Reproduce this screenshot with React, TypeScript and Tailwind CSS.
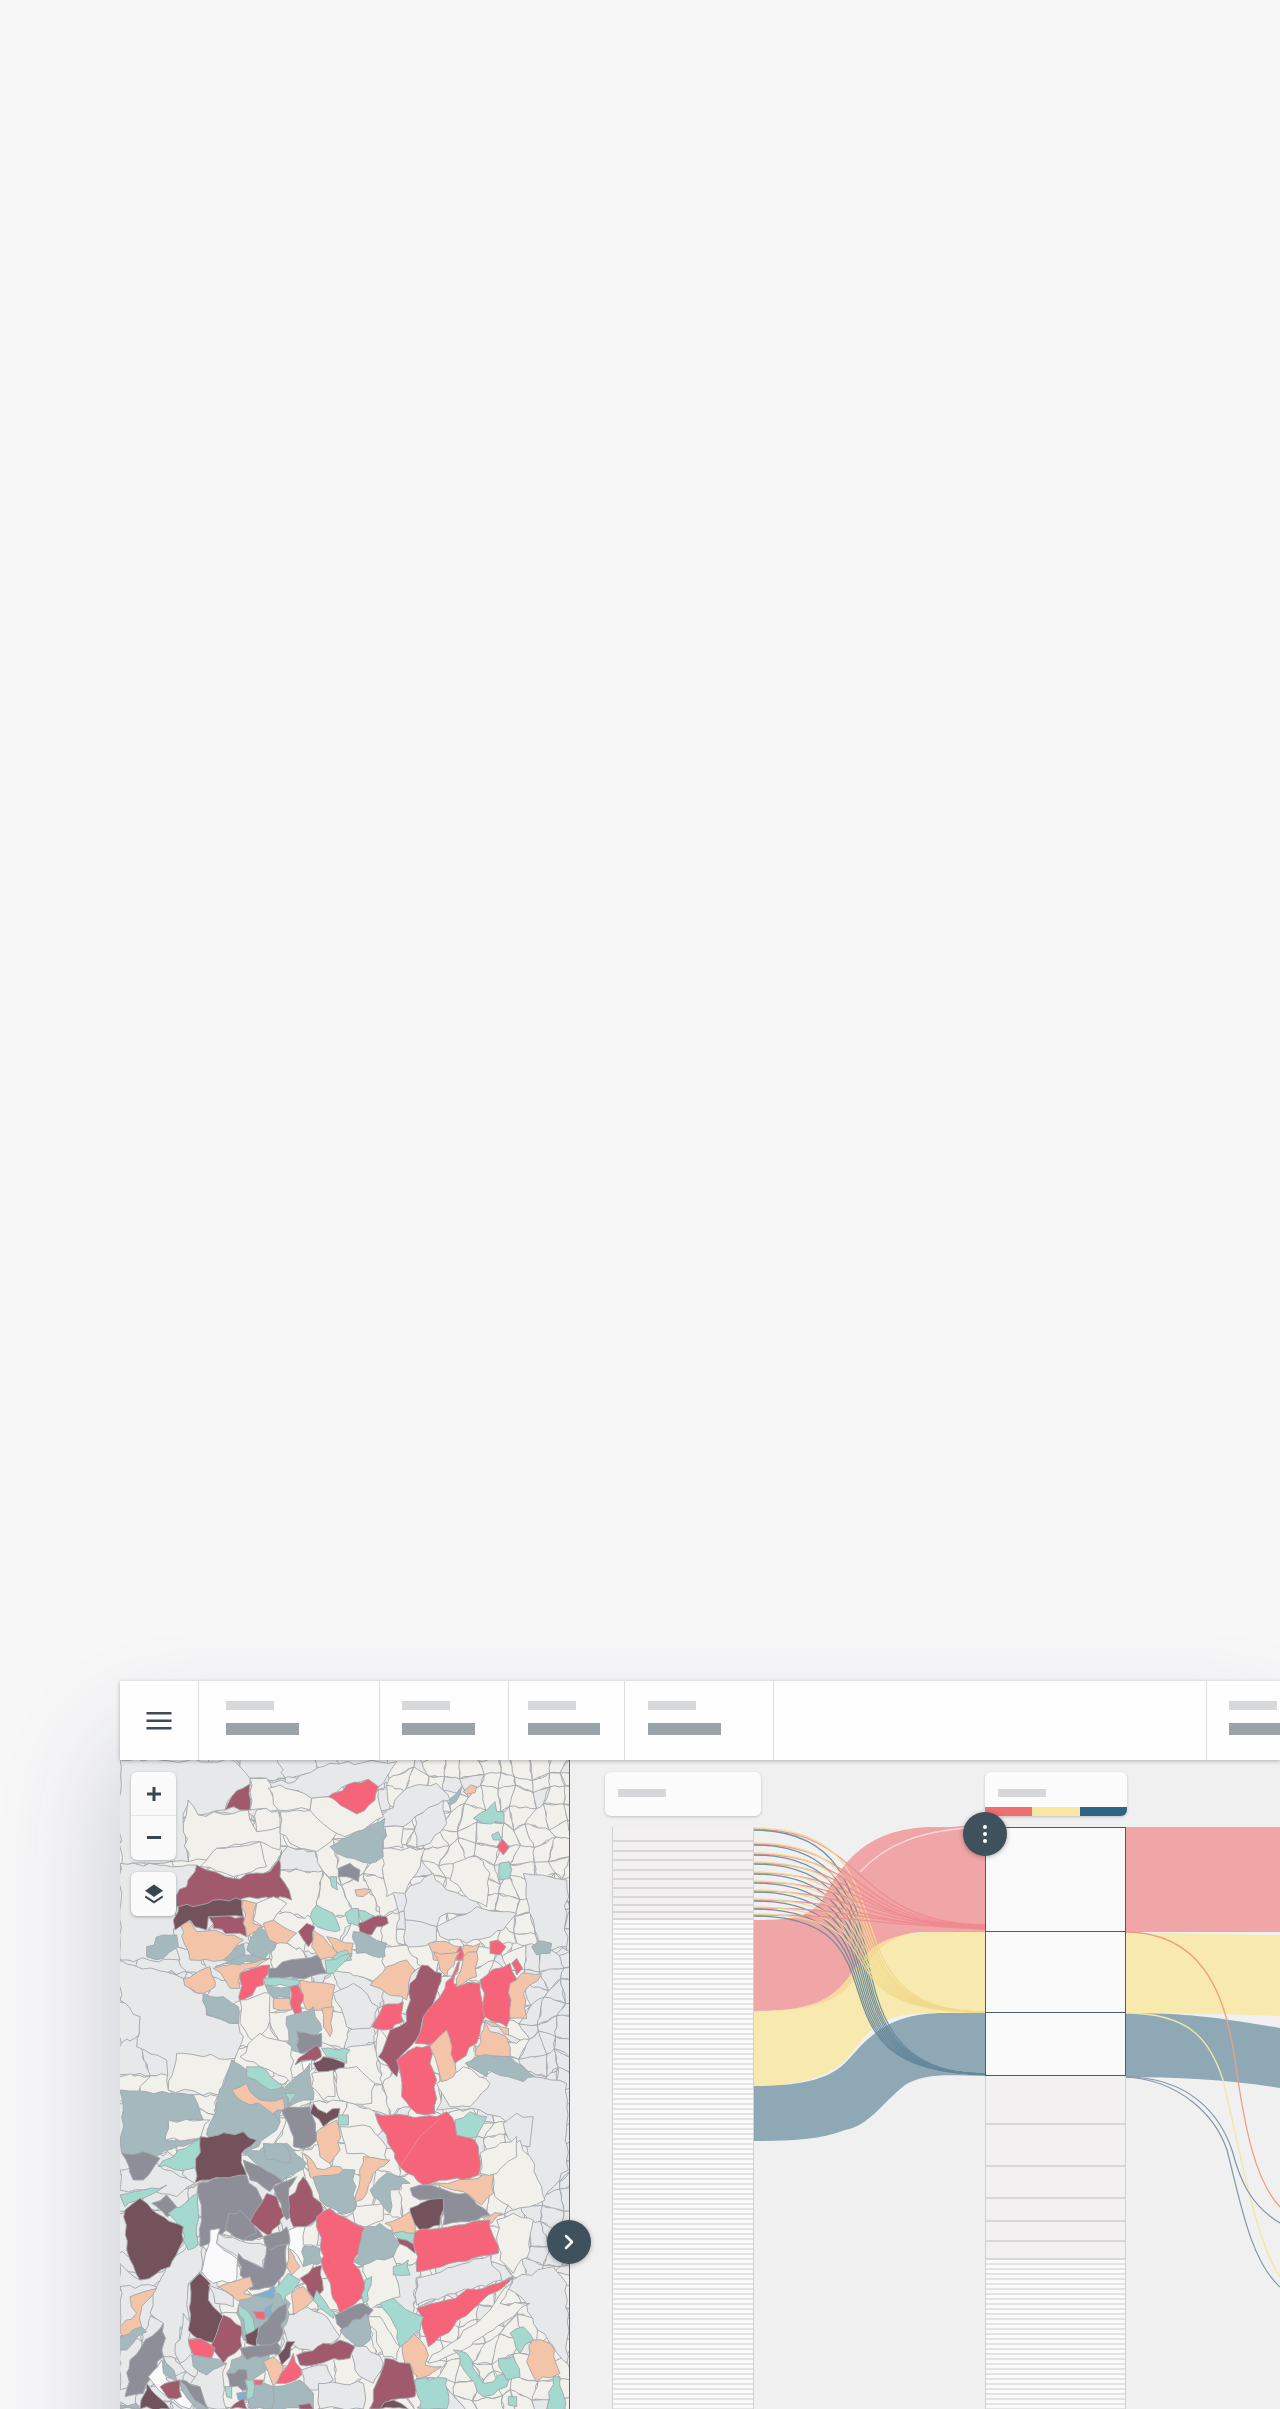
import { ChevronRight } from "lucide-react";

const COLORS: Record<string, string> = {
  c: "#f2f0eb",
  g: "#e7e8ea",
  t: "#a3b9bd",
  a: "#a3d9cf",
  p: "#f4c4a8",
  r: "#f6647a",
  m: "#a05a6b",
  d: "#74525c",
  s: "#8e8e98",
  w: "#fafafb",
  b: "#7fb0cf",
};

// regions traced from the top part of the map
const TOP_REGIONS: [string, string][] = [
  ["g", "60,300 400,300 450,355 565,370 690,310 890,305 850,370 835,380 805,358 740,375 685,410 635,415 570,390 505,385 500,355 450,355 450,372 395,410 375,450 295,465 265,420 250,490 265,605 90,610 60,630"],
  ["g", "60,610 290,615 260,680 230,705 230,740 220,810 240,900 60,900"],
  ["g", "830,490 920,385 1010,370 1050,420 945,470 910,500 855,500"],
  ["g", "945,470 1030,420 1040,490 990,550 950,560"],
  ["g", "915,700 1000,640 1040,690 1110,710 1150,750 1020,770 1010,800 915,780"],
  ["g", "1270,640 1400,660 1400,860 1330,880 1300,780"],
  ["g", "915,780 1010,800 1010,840 950,860 915,850"],
  ["g", "1010,800 1130,740 1250,760 1210,810 1100,850 1020,830"],
  ["c", "265,420 295,465 445,450 470,515 540,500 540,570 480,545 350,565 320,600 265,605 250,490"],
  ["c", "320,600 350,565 480,545 500,620 400,650 300,620"],
  ["c", "450,355 500,355 535,450 450,450"],
  ["c", "505,385 540,375 635,415 630,450 535,450"],
  ["c", "540,455 630,450 710,520 650,575 570,550 540,520"],
  ["c", "635,415 690,410 770,460 835,390 850,470 790,510 735,530 710,520 630,450"],
  ["c", "470,450 535,455 540,500 470,515"],
  ["c", "855,500 910,500 910,565 850,565"],
  ["c", "850,565 975,565 950,640 915,700 860,710 850,650"],
  ["c", "1060,610 1130,590 1170,640 1160,740 1090,700 1050,660"],
  ["r", "685,410 740,375 805,358 835,380 825,420 770,462 720,435"],
  ["m", "375,450 395,410 450,372 450,450 420,450 400,440"],
  ["t", "690,560 745,530 790,510 855,475 850,590 810,610 760,595 710,580"],
  ["m", "290,615 320,630 400,655 490,640 520,620 545,570 540,650 575,720 540,710 430,715 300,745 230,740 230,705 260,680"],
  ["p", "240,790 270,785 290,815 340,810 400,825 430,840 370,900 270,900"],
  ["m", "325,770 430,770 440,830 400,820 340,805"],
  ["d", "235,740 300,735 340,720 425,720 430,770 325,770 320,810 285,800 270,780 225,810 220,780"],
  ["p", "430,720 470,730 460,790 490,800 440,830"],
  ["c", "470,730 520,710 560,730 520,780 490,800 460,780"],
  ["t", "140,860 190,825 230,825 235,860 190,895 140,890"],
  ["s", "715,625 750,610 780,630 775,665 740,650 715,650"],
  ["p", "765,690 815,690 790,710 770,708"],
  ["a", "1120,475 1160,450 1185,425 1190,455 1212,455 1212,490 1150,490"],
  ["a", "1175,525 1195,515 1205,540 1180,540"],
  ["r", "1190,560 1208,538 1228,562 1210,585"],
  ["a", "1198,610 1228,605 1228,655 1200,660"],
  ["p", "1090,395 1112,375 1130,380 1125,398 1100,402"],
  ["t", "1045,430 1085,380 1080,405 1050,435"],
  ["a", "630,770 650,735 700,760 720,810 680,810 640,790"],
  ["a", "735,760 775,745 780,800 745,790"],
  ["a", "775,750 830,775 790,790 780,775"],
  ["m", "775,790 820,770 860,770 865,790 830,800 815,825 780,815"],
  ["m", "595,815 620,790 645,800 640,840 625,860"],
  ["p", "490,790 520,780 590,820 560,850 490,850"],
  ["t", "450,840 480,800 530,850 490,900 440,870"],
  ["p", "640,810 670,830 720,895 660,900 635,860"],
  ["p", "680,830 760,850 755,890 720,885"],
  ["t", "760,815 860,850 855,890 770,880"],
  ["p", "985,850 1040,845 1085,860 1090,900 1000,900"],
  ["p", "1090,855 1140,850 1130,900 1095,900"],
  ["r", "1170,845 1195,840 1218,860 1200,885 1170,880"],
  ["t", "1295,860 1320,842 1355,850 1350,880 1310,885"],
  ["r", "1070,900 1080,858 1095,900"],
  ["a", "690,650 710,650 712,690 695,680"],
  ["t", "370,900 430,850 430,900"],
  ["a", "700,890 740,870 755,900 700,900"],
];

// regions traced from the lower part of the map
const LOW_REGIONS: [string, string][] = [
  ["g", "60,30 250,85 270,115 310,130 320,195 415,220 430,260 405,325 360,440 205,420 200,330 110,290 120,200 75,160 60,150"],
  ["g", "700,130 760,100 835,170 810,235 740,230"],
  ["g", "1040,410 1130,400 1210,340 1300,380 1400,400 1405,660 1330,750 1280,590 1200,500 1140,480 1010,480"],
  ["g", "1210,520 1250,490 1300,500 1290,590 1240,580"],
  ["g", "60,660 170,640 285,700 230,740 130,720 60,720"],
  ["g", "60,940 120,990 210,950 190,990 130,1030 60,1020"],
  ["g", "60,1010 170,1010 180,1050 130,1150 60,1130"],
  ["g", "260,890 310,880 305,960 265,1000 265,1140 240,1130 240,1230 190,1220 190,1120 150,1090 170,1010 200,950"],
  ["g", "250,1090 275,1120 265,1170 275,1210 240,1240 225,1210"],
  ["g", "1200,1000 1360,950 1400,1000 1400,1240 1300,1120 1280,1060"],
  ["g", "300,1230 380,1240 370,1290 380,1377 280,1377 270,1320"],
  ["g", "605,1260 680,1245 700,1290 650,1320 620,1320"],
  ["g", "655,1300 790,1300 790,1377 660,1377"],
  ["g", "745,1190 800,1190 850,1240 820,1300 765,1260"],
  ["c", "230,310 405,325 355,435 205,420"],
  ["c", "985,1235 1170,1080 1240,980 1200,1060 1290,1060 1180,1140 1090,1200 1040,1220 985,1240"],
  ["c", "1145,640 1260,570 1290,620 1335,750 1240,780 1185,740 1180,670"],
  ["c", "1190,810 1240,790 1300,810 1290,900 1240,970 1200,930"],
  ["t", "310,130 370,140 415,170 415,220 320,195"],
  ["p", "250,85 330,50 345,110 310,130 270,115"],
  ["p", "340,55 510,25 420,70 420,115 390,115"],
  ["r", "420,70 510,45 490,105 420,155"],
  ["t", "345,50 440,15 510,25"],
  ["s", "505,55 650,15 680,70 590,85 505,85"],
  ["a", "490,85 590,90 605,100 570,110 495,105"],
  ["t", "495,105 570,110 570,145 520,145"],
  ["p", "520,145 570,145 575,180 520,175"],
  ["r", "570,110 595,105 615,145 590,210 570,160"],
  ["p", "600,90 705,105 695,180 620,180"],
  ["p", "665,175 700,170 690,260 670,230"],
  ["a", "675,30 730,15 755,10 700,70 680,70"],
  ["t", "560,200 640,170 665,240 610,310 560,290"],
  ["s", "590,245 665,250 665,290 600,310"],
  ["m", "585,345 610,315 650,285 665,320 630,330"],
  ["a", "665,295 750,300 740,340 680,320"],
  ["d", "640,340 670,320 735,340 730,360 665,375"],
  ["w", "605,335 635,330 635,360 615,375"],
  ["t", "395,330 440,360 560,420 565,470 545,480 530,540 430,610 320,555 355,440"],
  ["a", "440,350 480,350 550,410 510,420 440,380"],
  ["t", "555,410 630,340 640,450 565,470"],
  ["a", "555,430 590,430 570,465"],
  ["p", "395,420 440,400 480,450 550,445 555,480 520,490 540,515 490,470 430,455"],
  ["t", "60,420 280,435 310,510 210,510 195,570 300,565 170,620 65,610 70,480"],
  ["c", "205,510 310,510 330,510 300,565 195,570"],
  ["a", "175,650 235,600 305,565 300,660"],
  ["s", "65,610 130,605 180,625 130,690 100,690"],
  ["d", "300,560 430,545 470,570 425,610 440,675 285,698"],
  ["s", "295,700 440,675 500,770 450,810 490,860 430,870 380,840 300,890"],
  ["s", "385,790 420,780 460,820 470,850 430,870 375,840"],
  ["a", "60,735 130,720 200,705 130,745 75,770"],
  ["s", "155,760 200,735 230,770 200,800"],
  ["a", "205,790 295,730 295,880 265,900 240,830"],
  ["d", "75,780 120,745 170,790 250,830 250,870 210,950 120,990 80,900"],
  ["p", "90,1040 170,1015 125,1070 125,1130 75,1165 60,1130 110,1090"],
  ["t", "60,1160 125,1130 140,1145 80,1200 60,1200"],
  ["s", "90,1230 190,1120 190,1220 130,1330 75,1340"],
  ["w", "145,1280 185,1230 200,1290 275,1340 270,1377 200,1340"],
  ["t", "190,1220 230,1290 300,1310 320,1377 290,1377 240,1300 190,1270"],
  ["s", "235,1290 300,1310 325,1377 270,1330"],
  ["m", "180,1310 240,1290 245,1340 205,1345"],
  ["d", "120,1377 140,1300 210,1377"],
  ["t", "60,1365 110,1360 120,1377 60,1377"],
  ["w", "330,840 360,835 350,880 415,930 410,990 340,1000 305,965"],
  ["g", "355,850 500,890 490,955 400,910 350,880"],
  ["s", "415,910 490,955 500,890 560,880 560,950 520,1010 450,1020 420,975"],
  ["d", "270,1000 300,970 330,1000 325,1050 370,1100 355,1180 300,1170 265,1140"],
  ["m", "370,1095 425,1130 425,1190 370,1240 330,1190"],
  ["r", "265,1170 300,1165 345,1195 335,1225 280,1215"],
  ["g", "325,1005 400,1040 400,1070 345,1060"],
  ["t", "275,1215 330,1225 370,1240 380,1240 320,1275 280,1250"],
  ["p", "355,1010 450,980 460,1010 430,1030 500,1050 490,1065 410,1050"],
  ["c", "420,150 510,130 510,210 470,280 420,220"],
  ["c", "420,320 480,250 575,290 575,400 480,350"],
  ["c", "635,370 700,360 705,440 670,450 635,410"],
  ["c", "705,360 770,350 825,400 815,460 720,450"],
  ["c", "720,530 810,530 860,590 860,630 790,610 740,610"],
  ["c", "760,770 850,760 850,810 800,830 765,820"],
  ["c", "830,210 890,330 890,380 830,320"],
  ["s", "545,480 630,470 660,560 630,590 580,590 565,520"],
  ["d", "630,490 640,460 680,490 720,475 715,500 670,530"],
  ["a", "715,495 745,495 745,525 715,525"],
  ["p", "650,545 710,510 720,600 690,640 660,620"],
  ["t", "430,610 560,580 620,640 550,690 480,650"],
  ["t", "490,580 560,590 570,640 500,630"],
  ["s", "430,630 480,650 550,695 510,725 450,690"],
  ["p", "610,610 650,655 720,650 745,680 705,725 630,680"],
  ["t", "640,680 765,660 765,780 720,790 660,750"],
  ["p", "790,620 870,630 820,670 800,730 765,755"],
  ["t", "810,720 860,670 930,700 870,720 870,790 820,740"],
  ["m", "450,815 500,730 530,740 560,790 510,860"],
  ["s", "520,710 590,680 565,740 595,800 560,810 530,740"],
  ["m", "565,740 610,680 670,780 620,830 580,830"],
  ["s", "490,860 560,830 570,880 510,900"],
  ["w", "565,840 620,830 610,950 595,920 565,895"],
  ["c", "615,830 650,810 650,890 610,885"],
  ["t", "610,890 660,895 670,935 610,950"],
  ["p", "565,895 600,950 575,975 560,950"],
  ["r", "650,800 690,775 790,830 800,860 760,940 790,990 795,1040 720,1090 670,960"],
  ["t", "800,830 840,820 900,880 880,920 790,950 760,935"],
  ["m", "600,985 665,945 670,1020 640,1045"],
  ["p", "575,1030 610,1010 640,1050 605,1095 580,1090"],
  ["a", "650,1020 705,1090 700,1105 640,1050"],
  ["c", "790,945 880,920 900,1040 810,1080"],
  ["a", "880,950 925,930 930,975 880,975"],
  ["a", "795,990 815,980 805,1050 790,1060"],
  ["s", "705,1095 790,1060 820,1080 770,1130 730,1140"],
  ["t", "720,1140 800,1090 810,1170 770,1190"],
  ["g", "545,1110 620,1070 680,1100 720,1160 640,1215 560,1170"],
  ["c", "805,1100 840,1100 900,1190 890,1230 850,1220"],
  ["t", "420,1050 530,1030 570,1060 560,1120 500,1190 430,1170 410,1090"],
  ["a", "415,1065 445,1085 470,1150 445,1160"],
  ["a", "520,1020 565,970 600,990 550,1060"],
  ["b", "460,1035 520,1005 520,1045 480,1040"],
  ["b", "495,1075 520,1060 515,1100 495,1105"],
  ["r", "460,1085 495,1085 495,1110 470,1105"],
  ["s", "480,1130 560,1060 540,1170 500,1200 465,1180"],
  ["d", "435,1155 475,1130 470,1190 440,1180"],
  ["t", "395,1230 520,1190 500,1260 440,1300 380,1270"],
  ["s", "420,1195 530,1175 540,1215 440,1230"],
  ["m", "590,1215 720,1170 765,1190 750,1225 600,1245"],
  ["p", "490,1235 520,1220 550,1250 520,1310"],
  ["d", "535,1215 560,1175 585,1175 570,1220 545,1245"],
  ["r", "530,1300 580,1210 605,1275 560,1300"],
  ["s", "380,1270 440,1260 450,1320 390,1310"],
  ["t", "440,1300 520,1310 515,1377 450,1377"],
  ["t", "520,1310 600,1290 640,1330 640,1377 515,1377"],
  ["a", "375,1310 395,1310 395,1345 380,1340"],
  ["a", "435,1290 460,1290 460,1340 440,1350"],
  ["r", "460,1290 490,1290 485,1305 465,1305"],
  ["b", "410,1330 440,1325 440,1350 415,1350"],
  ["m", "390,1377 430,1345 440,1377"],
  ["m", "595,1365 630,1360 640,1377 600,1377"],
  ["s", "930,715 960,705 1100,730 1170,795 1030,825 1030,750 960,750"],
  ["d", "930,775 985,750 1030,745 1020,825 960,840 930,810"],
  ["p", "990,705 1180,670 1180,730 1145,765 1090,725"],
  ["p", "855,820 930,785 945,850 880,850"],
  ["a", "880,850 945,850 945,880 900,870"],
  ["m", "890,865 945,885 945,910 920,890"],
  ["p", "1145,800 1205,790 1175,820"],
  ["r", "945,845 1170,810 1195,910 950,965"],
  ["g", "950,985 1170,915 1205,990 950,1065"],
  ["r", "950,1075 1240,980 985,1190"],
  ["r", "825,490 1010,500 1040,485 1135,590 1135,675 970,705 900,650"],
  ["a", "1065,510 1110,485 1160,500 1130,560 1070,555"],
  ["c", "1140,610 1250,560 1250,620 1190,670 1140,670"],
  ["c", "1010,400 1090,350 1170,400 1110,470 1050,470"],
  ["m", "835,320 870,240 920,215 930,100 965,45 1025,70 1010,130 1000,190 970,200 960,250 900,320 890,380"],
  ["r", "890,330 950,290 990,285 990,340 1010,390 1005,490 950,490 905,440"],
  ["r", "945,280 970,200 1020,140 1090,20 1060,100 1140,100 1155,200 1130,280 1060,345 1040,240 990,285"],
  ["r", "1140,90 1230,40 1255,95 1220,230 1155,200"],
  ["r", "1235,40 1250,25 1268,55 1250,75"],
  ["p", "1230,100 1265,70 1325,70 1270,130 1280,205 1230,205"],
  ["p", "990,290 1040,240 1065,340 1060,380 1025,395 1010,340"],
  ["p", "1155,210 1225,235 1230,320 1125,315"],
  ["p", "810,105 860,50 920,30 945,60 925,100 920,150 860,130"],
  ["r", "815,230 850,165 910,155 910,215 850,240"],
  ["p", "1000,5 1080,5 1040,80 1020,60"],
  ["p", "1090,20 1130,5 1130,80 1070,110"],
  ["t", "1095,340 1130,320 1230,320 1305,380 1270,395 1165,360 1160,380"],
  ["g", "1155,215 1260,270 1250,280 1170,245"],
  ["p", "905,1175 940,1150 985,1215 975,1245 1025,1250 960,1285 915,1240"],
  ["a", "840,1060 880,1045 970,1100 960,1140 900,1190 880,1120"],
  ["a", "945,1290 1040,1285 1040,1377 960,1377"],
  ["m", "820,1320 855,1225 930,1240 945,1340 870,1350 840,1377 810,1377"],
  ["d", "840,1377 880,1350 925,1377"],
  ["a", "1060,1200 1100,1210 1150,1300 1225,1270 1220,1310 1150,1340"],
  ["p", "1280,1235 1300,1170 1350,1180 1380,1270 1310,1295"],
  ["a", "1230,1150 1270,1130 1300,1170 1260,1210"],
  ["a", "1195,1225 1240,1220 1260,1280 1220,1290"],
  ["a", "1360,1280 1380,1280 1395,1377 1340,1377"],
  ["a", "1225,1340 1250,1340 1250,1370 1225,1365"],
];

const hash = (i: number, j: number) => {
  const v = Math.sin(i * 12.9898 + j * 78.233) * 43758.5453;
  return v - Math.floor(v);
};

// break long edges up so borders look like hand-drawn municipal limits
function roughen(points: string, seg = 24, amp = 7) {
  const pts = points.split(" ").map((p) => p.split(",").map(Number));
  const out: string[] = [];
  pts.forEach(([x, y], n) => {
    const [nx, ny] = pts[(n + 1) % pts.length];
    const steps = Math.max(1, Math.round(Math.hypot(nx - x, ny - y) / seg));
    for (let s = 0; s < steps; s++) {
      const k = s / steps;
      const dx = s === 0 ? 0 : (hash(x + s, y) - 0.5) * amp * 2;
      const dy = s === 0 ? 0 : (hash(y + s, x + 5) - 0.5) * amp * 2;
      out.push(`${(x + (nx - x) * k + dx).toFixed(0)},${(y + (ny - y) * k + dy).toFixed(0)}`);
    }
  });
  return out.join(" ");
}

// which base colour a filler cell gets, outside the traced regions
function baseFill(x: number, y: number) {
  if (x < 420 && y > -130 && y < 420) return COLORS.g;
  if (y < -420 && x < 900) return COLORS.g;
  if (x > 1300 && y > -130 && y < 1000) return COLORS.g;
  if (x < 300 && y > 600) return COLORS.g;
  if (x > 690 && x < 830 && y > 90 && y < 240) return COLORS.g;
  return COLORS.c;
}

// thin mesh of small cells sitting under the traced regions
function meshCells(x0: number, y0: number, cols: number, rows: number, step: number) {
  const corner = (i: number, j: number) =>
    `${(x0 + i * step + (hash(i, j) - 0.5) * step * 0.8).toFixed(0)},${(y0 + j * step + (hash(j + 7, i + 3) - 0.5) * step * 0.8).toFixed(0)}`;
  const cells: { pts: string; fill: string }[] = [];
  for (let i = 0; i < cols; i++) {
    for (let j = 0; j < rows; j++) {
      const cx = x0 + (i + 0.5) * step;
      const cy = y0 + (j + 0.5) * step;
      const stray = hash(i + 31, j + 11) > 0.9;
      cells.push({
        pts: roughen([corner(i, j), corner(i + 1, j), corner(i + 1, j + 1), corner(i, j + 1)].join(" "), 16, step > 60 ? 7 : 4),
        fill: stray ? COLORS.g : baseFill(cx, cy),
      });
    }
  }
  return cells;
}

const WIDE_CELLS = meshCells(30, -620, 15, 22, 100);
const TIGHT_CELLS = [...meshCells(880, -580, 11, 11, 52), ...meshCells(1120, 0, 6, 27, 52), ...meshCells(970, 1000, 9, 8, 56)];
const TOP_SHAPES = TOP_REGIONS.map(([k, pts]) => [k, roughen(pts)]);
const LOW_SHAPES = LOW_REGIONS.map(([k, pts]) => [k, roughen(pts)]);

function ChoroplethMap() {
  return (
    <svg viewBox="60 -570 1347 1947" className="block h-[649px] w-[449px]">
      <rect x="60" y="-570" width="1347" height="1947" fill={COLORS.g} />
      <g stroke="#a3a8ac" strokeWidth="2.8" strokeLinejoin="round">
        {WIDE_CELLS.map((c, i) => (
          <polygon key={i} points={c.pts} fill={c.fill} />
        ))}
        {TIGHT_CELLS.map((c, i) => (
          <polygon key={i} points={c.pts} fill={c.fill} />
        ))}
        <g transform="translate(0 -870)">
          {TOP_SHAPES.map(([k, pts], i) => (
            <polygon key={i} points={pts} fill={COLORS[k]} />
          ))}
        </g>
        {LOW_SHAPES.map(([k, pts], i) => (
          <polygon key={i} points={pts} fill={COLORS[k]} />
        ))}
        <polyline points="900,650 960,560 1020,505" fill="none" stroke="#e98a98" />
      </g>
    </svg>
  );
}

const HEADER_CELLS = [
  { cls: "w-[181px] pl-[27px]" },
  { cls: "w-[129px] pl-[22px]" },
  { cls: "w-[116px] pl-[19px]" },
  { cls: "w-[149px] pl-[23px]" },
];

function HeaderBars({ wide = 73 }: { wide?: number }) {
  return (
    <div className="pt-5">
      <div className="h-[9px] w-12 bg-[#d6d8dc]" />
      <div className="mt-[13px] h-3 bg-[#9aa3a8]" style={{ width: wide }} />
    </div>
  );
}

function TopBar() {
  return (
    <div className="relative z-10 flex h-[79px] bg-[#fefefe] shadow-[0_1px_4px_rgba(0,0,0,0.28)]">
      <div className="flex w-[79px] shrink-0 items-center justify-center border-r border-[#dcdde0]">
        <svg width="26" height="18" viewBox="0 0 26 18" fill="#3c4d57">
          <rect x="0.5" y="0" width="25" height="2.5" />
          <rect x="0.5" y="7.5" width="25" height="2.5" />
          <rect x="0.5" y="15" width="25" height="2.5" />
        </svg>
      </div>
      {HEADER_CELLS.map((c, i) => (
        <div key={i} className={`${c.cls} shrink-0 border-r border-[#dcdde0]`}>
          <HeaderBars wide={i === 2 ? 72 : 73} />
        </div>
      ))}
      <div className="w-[433px] shrink-0 border-r border-[#dcdde0]" />
      <div className="flex-1 pl-[22px]">
        <HeaderBars />
      </div>
    </div>
  );
}

function MapControls() {
  return (
    <div className="absolute left-[11px] top-3 flex w-[45px] flex-col gap-3">
      <div className="rounded-md bg-[#fafafb] shadow-[0_1px_3px_rgba(0,0,0,0.25)]">
        <div className="flex h-11 items-center justify-center border-b border-[#e4e5e7]">
          <svg width="14" height="14" viewBox="0 0 14 14" fill="#36474f">
            <rect x="5.5" y="0" width="3" height="14" />
            <rect x="0" y="5.5" width="14" height="3" />
          </svg>
        </div>
        <div className="flex h-11 items-center justify-center">
          <svg width="14" height="4" viewBox="0 0 14 4" fill="#36474f">
            <rect x="0" y="0" width="14" height="3" />
          </svg>
        </div>
      </div>
      <div className="flex h-11 items-center justify-center rounded-md bg-[#fafafb] shadow-[0_1px_3px_rgba(0,0,0,0.3)]">
        <svg width="20" height="20" viewBox="0 0 20 20" fill="#36474f">
          <path d="M10 0.5 L19 6.8 L10 13 L1 6.8 Z" />
          <path d="M1.5 11.5 L10 17 L18.5 11.5 L19 13.4 L10 19.6 L1 13.4 Z" />
        </svg>
      </div>
    </div>
  );
}

const COL1_TOP = [15, 10, 9, 10, 9, 9, 9, 8, 7, 7];
const COL2_BOXES = [105, 81, 63];
const COL2_GRAY = [49, 42, 32, 23, 20, 18];
const DENSE_COL1 = Array.from({ length: 98 }, (_, i) => i);
const DENSE_COL2 = Array.from({ length: 30 }, (_, i) => i);

function TintRow({ h }: { h: number }) {
  return <div className="box-border border-b-2 border-[#d8d7d7] bg-[#f2f0f0]" style={{ height: h }} />;
}

function DenseRow() {
  return <div className="box-border h-[5px] border-b-2 border-[#e4e4e4] bg-[#fafafa]" />;
}

function ColumnCard({ className, strip }: { className: string; strip?: boolean }) {
  return (
    <div className={`relative z-10 h-11 overflow-hidden rounded-md bg-[#fbfbfb] shadow-[0_1px_3px_rgba(0,0,0,0.2)] ${className}`}>
      <div className="ml-[13px] mt-[17px] h-2 w-12 bg-[#d6d8dc]" />
      {strip && (
        <div className="absolute inset-x-0 bottom-0 flex h-[9px]">
          <div className="flex-1 bg-[#ee6f70]" />
          <div className="flex-1 bg-[#f8e7a2]" />
          <div className="flex-1 bg-[#2f6484]" />
        </div>
      )}
    </div>
  );
}

const ROW_MIDS = [1828, 1843, 1853, 1862, 1872, 1881, 1890, 1899, 1907, 1914];

function Sankey() {
  return (
    <svg className="absolute left-0 top-0" width="710" height="649" viewBox="570 1760 710 649" fill="none">
      <path d="M753 1920 C790 1920 810 1918 822 1900 C840 1870 860 1827 935 1827 L985 1827 L985 1932 L925 1932 C875 1932 865 1975 845 1990 C825 2008 790 2011 753 2011 Z" fill="#f0a5a7" />
      <path d="M753 2011 C800 2011 830 2005 850 1975 C870 1945 885 1932 940 1932 L985 1932 L985 2013 L930 2013 C880 2013 870 2030 850 2055 C830 2080 790 2086 753 2086 Z" fill="#fae79d" fillOpacity="0.8" />
      <path d="M753 2086 C800 2086 830 2080 848 2060 C870 2035 890 2013 945 2013 L985 2013 L985 2076 C945 2075 925 2073 905 2085 C880 2105 870 2125 845 2130 C820 2140 790 2141 753 2141 Z" fill="#7796a7" fillOpacity="0.8" />

      <path d="M1125 1827 H1280 V1932 H1125 Z" fill="#f0a5a7" />
      <path d="M1125 1933 C1180 1933 1230 1935 1280 1935 V2016 C1230 2014 1180 2013 1125 2013 Z" fill="#f8e9ae" />
      <path d="M1125 2013 C1190 2013 1220 2018 1280 2028 V2088 C1230 2080 1180 2077 1125 2077 Z" fill="#8fa8b6" />

      <path d="M860 1872 C885 1845 920 1829 985 1827" stroke="#f6dada" strokeWidth="1.5" />
      <path d="M860 1868 C885 1838 920 1826 985 1826" stroke="#efa4a8" strokeWidth="1.2" />
      {ROW_MIDS.map((y, i) => (
        <g key={y} strokeWidth="1.3" strokeOpacity="0.9">
          <path d={`M753 ${y + 1} C 868 ${y + 1}, 850 ${1923 + (i % 4)}, 985 ${1925 + (i % 5)}`} stroke="#f08a90" />
          <path d={`M753 ${y} C ${925 - i} ${y}, ${812 - i} 2012, 985 2012`} stroke="#efd98c" />
          <path d={`M753 ${y + 2} C ${930 - i} ${y + 2}, ${800 - i} 2074, 985 2074`} stroke="#66889b" />
        </g>
      ))}

      <path d="M1125 1932 C1200 1932 1225 1990 1235 2060 C1245 2130 1255 2180 1280 2207" stroke="#ee9f80" strokeWidth="1.3" />
      <path d="M1125 2013 C1190 2013 1210 2040 1223 2080 C1240 2150 1255 2240 1280 2277" stroke="#efe6a8" strokeWidth="1.4" />
      <path d="M1125 2077 C1190 2077 1220 2115 1232 2150 C1240 2180 1250 2205 1280 2223" stroke="#8296a8" strokeWidth="1.2" />
      <path d="M1125 2077 C1180 2080 1215 2115 1227 2150 C1240 2200 1250 2260 1280 2287" stroke="#8296a8" strokeWidth="1.2" />
    </svg>
  );
}

function SankeyPanel() {
  return (
    <div className="relative min-w-0 flex-1 bg-[#f0f0f0]">
      <Sankey />
      <div className="relative flex gap-[224px] pl-[35px] pt-3">
        <div className="w-[156px] shrink-0">
          <ColumnCard className="w-full" />
          <div className="relative mx-[7px] mt-[11px] h-[600px] overflow-hidden border-x border-[#d0d0d0]">
            {COL1_TOP.map((h, i) => (
              <TintRow key={i} h={h} />
            ))}
            {DENSE_COL1.map((i) => (
              <DenseRow key={i} />
            ))}
          </div>
        </div>
        <div className="w-[142px] shrink-0">
          <ColumnCard className="w-full" strip />
          <div className="mt-[11px] h-[600px] w-[141px] overflow-hidden">
            {COL2_BOXES.map((h, i) => (
              <div key={i} className="box-border border-x border-b border-[#4c5c66] bg-[#fafafa] first:border-t" style={{ height: h }} />
            ))}
            <div className="border-x border-[#d0d0d0]">
              {COL2_GRAY.map((h, i) => (
                <TintRow key={i} h={h} />
              ))}
              {DENSE_COL2.map((i) => (
                <DenseRow key={i} />
              ))}
            </div>
          </div>
        </div>
      </div>
      <button className="absolute left-[393px] top-[52px] z-20 flex h-11 w-11 flex-col items-center justify-center gap-[3px] rounded-full bg-[#3e515c] shadow-[0_1px_5px_rgba(0,0,0,0.3)]">
        <span className="h-1 w-1 rounded-full bg-white" />
        <span className="h-1 w-1 rounded-full bg-white" />
        <span className="h-1 w-1 rounded-full bg-white" />
      </button>
    </div>
  );
}

export default function App() {
  return (
    <div className="h-[2409px] overflow-hidden bg-[#f7f7f8] pl-[120px] pt-[1681px]">
      <div className="h-[800px] w-[1160px] bg-[#f0f0f0] shadow-[0_70px_110px_rgba(50,60,90,0.24)]">
        <TopBar />
        <div className="flex h-[649px]">
          <div className="relative w-[450px] shrink-0 border-r border-[#5f6d75]">
            <ChoroplethMap />
            <MapControls />
            <button className="absolute -right-[22px] top-[460px] z-20 flex h-11 w-11 items-center justify-center rounded-full bg-[#3e515c] text-white shadow-[0_1px_5px_rgba(0,0,0,0.3)]">
              <ChevronRight size={24} strokeWidth={2.5} />
            </button>
          </div>
          <SankeyPanel />
        </div>
      </div>
    </div>
  );
}
